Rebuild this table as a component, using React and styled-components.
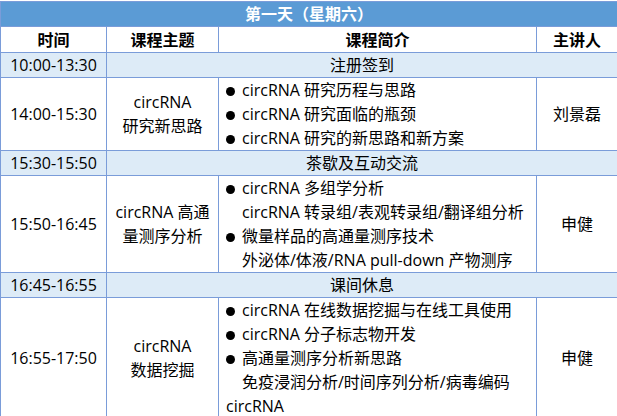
import React from "react";
import styled, { createGlobalStyle } from "styled-components";

const Global = createGlobalStyle`
  html, body { margin: 0; padding: 0; background: #fff; }
  body { font-family: "Open Sans", "Noto Sans CJK SC", sans-serif; color: #000; }
`;

const Table = styled.table`
  border-collapse: collapse;
  table-layout: fixed;
  width: 617px;
  margin-top: 1px;
  border: 1px solid #5a82cc;
  font-size: 16px;
  line-height: 24px;
`;

const Col = styled.col`
  width: ${(p) => p.$w}px;
`;

const TitleCell = styled.th`
  background: #5b9bd5;
  color: #fff;
  font-weight: 700;
  height: 24px;
  padding: 0;
  text-align: center;
  border: 1px solid #7a9cd9;
  line-height: 24px;
`;

const HeadCell = styled.th`
  background: #fff;
  font-weight: 700;
  height: 25px;
  padding: 0;
  text-align: center;
  border: 1px solid #7a9cd9;
`;

const Cell = styled.td`
  padding: 0 ${(p) => (p.$left ? "4px 0 7px" : "0")};
  padding-left: ${(p) => (p.$left ? "7px" : "0")};
  text-align: ${(p) => (p.$left ? "left" : "center")};
  vertical-align: middle;
  border: 1px solid #7a9cd9;
  background: ${(p) => (p.$shade ? "#ddebf7" : "#fff")};
  white-space: ${(p) => (p.$left ? "nowrap" : "normal")};
`;

const Item = styled.div`
  display: flex;
  align-items: center;
`;

const Dot = styled.span`
  flex: none;
  width: 9px;
  height: 9px;
  border-radius: 50%;
  background: #000;
  margin-right: 7px;
  margin-top: 2px;
`;

const Sub = styled.div`
  text-indent: 16px;
`;

const Bullet = ({ children }) => (
  <Item>
    <Dot />
    <span>{children}</span>
  </Item>
);

export default function App() {
  return (
    <>
      <Global />
      <Table>
        <colgroup>
          <Col $w={106} />
          <Col $w={112} />
          <Col $w={318} />
          <Col $w={81} />
        </colgroup>
        <thead>
          <tr>
            <TitleCell colSpan={4}>第一天（星期六）</TitleCell>
          </tr>
          <tr>
            <HeadCell>时间</HeadCell>
            <HeadCell>课程主题</HeadCell>
            <HeadCell>课程简介</HeadCell>
            <HeadCell>主讲人</HeadCell>
          </tr>
        </thead>
        <tbody>
          <tr>
            <Cell $shade>10:00-13:30</Cell>
            <Cell $shade colSpan={3}>注册签到</Cell>
          </tr>
          <tr>
            <Cell>14:00-15:30</Cell>
            <Cell>
              circRNA
              <br />
              研究新思路
            </Cell>
            <Cell $left>
              <Bullet>circRNA 研究历程与思路</Bullet>
              <Bullet>circRNA 研究面临的瓶颈</Bullet>
              <Bullet>circRNA 研究的新思路和新方案</Bullet>
            </Cell>
            <Cell>刘景磊</Cell>
          </tr>
          <tr>
            <Cell $shade>15:30-15:50</Cell>
            <Cell $shade colSpan={3}>茶歇及互动交流</Cell>
          </tr>
          <tr>
            <Cell>15:50-16:45</Cell>
            <Cell>
              circRNA 高通
              <br />
              量测序分析
            </Cell>
            <Cell $left>
              <Bullet>circRNA 多组学分析</Bullet>
              <Sub>circRNA 转录组/表观转录组/翻译组分析</Sub>
              <Bullet>微量样品的高通量测序技术</Bullet>
              <Sub>外泌体/体液/RNA pull-down 产物测序</Sub>
            </Cell>
            <Cell>申健</Cell>
          </tr>
          <tr>
            <Cell $shade>16:45-16:55</Cell>
            <Cell $shade colSpan={3}>课间休息</Cell>
          </tr>
          <tr>
            <Cell>16:55-17:50</Cell>
            <Cell>
              circRNA
              <br />
              数据挖掘
            </Cell>
            <Cell $left>
              <Bullet>circRNA 在线数据挖掘与在线工具使用</Bullet>
              <Bullet>circRNA 分子标志物开发</Bullet>
              <Bullet>高通量测序分析新思路</Bullet>
              <Sub>
                免疫浸润分析/时间序列分析/病毒编码
                <br />
                circRNA
              </Sub>
            </Cell>
            <Cell>申健</Cell>
          </tr>
        </tbody>
      </Table>
    </>
  );
}
